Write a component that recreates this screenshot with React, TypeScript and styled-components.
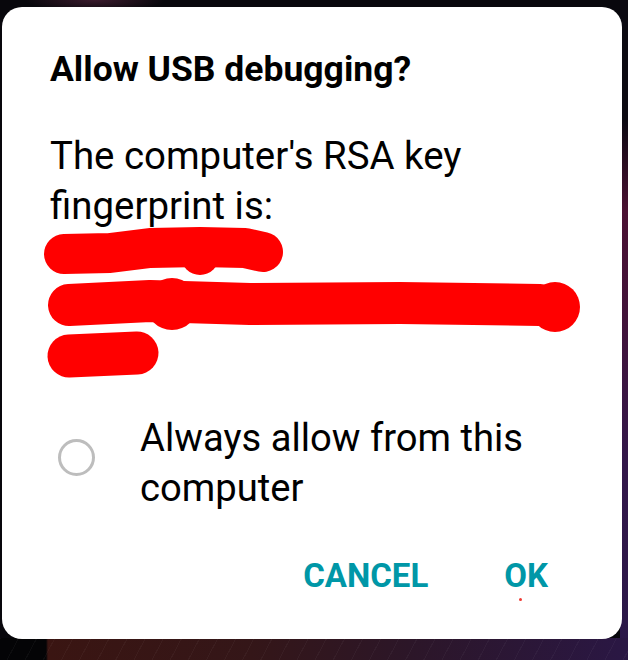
import React, { useState } from 'react'
import styled, { createGlobalStyle } from 'styled-components'

const GlobalStyle = createGlobalStyle`
  html, body {
    margin: 0;
    padding: 0;
  }
  body {
    min-height: 660px;
    font-family: Roboto, "Noto Sans", "Liberation Sans", sans-serif;
    background-color: #08070c;
    background-image:
      repeating-linear-gradient(118deg, rgba(255, 255, 255, 0.035) 0 1px, transparent 1px 16px),
      linear-gradient(90deg, #040406 0, #040406 46px, #3a1512 48px, #341618 40%, #2c1628 65%, #2a1744 100%),
      linear-gradient(180deg, #0c0a12 0, #0c0a12 18%, #4b1133 32%, #42133a 48%, #33174a 70%, #2a1848 100%),
      radial-gradient(ellipse 70px 12px at 95px 0, #3a1a2c, transparent);
    background-size: 100% 22px, 100% 22px, 8px 100%, 100% 10px;
    background-position: 0 100%, 0 100%, 100% 0, 0 0;
    background-repeat: no-repeat;
  }
`

const Dialog = styled.div`
  box-sizing: border-box;
  width: 620px;
  margin: 7px 6px 0 2px;
  padding: 42px 48px 44px 48px;
  background: #ffffff;
  border-radius: 20px;
`

const Title = styled.h2`
  margin: 0;
  font-size: 35.5px;
  line-height: 40px;
  font-weight: 700;
  color: #000;
`

const Message = styled.p`
  margin: 42px 0 0;
  font-size: 38.4px;
  line-height: 50px;
  font-weight: 400;
  color: #000;
`

const Fingerprint = styled.div`
  height: 150px;
`

const Scribble = styled.svg`
  display: block;
  overflow: visible;
`

const CheckRow = styled.label`
  display: flex;
  align-items: flex-start;
  gap: 45px;
  margin-top: 32px;
  cursor: pointer;
`

const Radio = styled.span<{ $checked: boolean }>`
  box-sizing: border-box;
  flex: none;
  width: 37px;
  height: 37px;
  margin: 26px 0 0 8px;
  border-radius: 50%;
  border: 3.5px solid ${p => (p.$checked ? '#0097a7' : '#bdbdbd')};
  background: ${p => (p.$checked ? 'radial-gradient(circle, #0097a7 0 8px, transparent 9px)' : 'transparent')};
`

const CheckLabel = styled.span`
  font-size: 38.2px;
  line-height: 50px;
  color: #000;
`

const Actions = styled.div`
  display: flex;
  justify-content: flex-end;
  gap: 76px;
  margin: 44px 26px 0 0;
`

const ActionButton = styled.button`
  position: relative;
  padding: 0;
  border: none;
  background: none;
  font-family: Roboto, "Noto Sans", "Liberation Sans", sans-serif;
  font-size: 33px;
  line-height: 38px;
  font-weight: 700;
  color: #0097a7;
  cursor: pointer;
`

const TouchDot = styled.span`
  position: absolute;
  left: 15px;
  top: 41px;
  width: 3px;
  height: 3px;
  border-radius: 50%;
  background: #f03a32;
`

const App = () => {
  const [always, setAlways] = useState(false)

  return (
    <>
      <GlobalStyle />
      <Dialog>
        <Title>Allow USB debugging?</Title>
        <Message>The computer's RSA key fingerprint is:</Message>
        <Fingerprint>
          {/* hand-drawn red marker over the key */}
          <Scribble width="530" height="150" viewBox="0 0 530 150">
            <g fill="#ff0000" stroke="#ff0000" strokeLinecap="round" strokeLinejoin="round">
              <path d="M14 23 L60 22 L100 17 L150 16 L195 17 L213 21" fill="none" strokeWidth="40" />
              <circle cx="150" cy="25" r="19" stroke="none" />
              <path d="M19 74 L100 70 L200 73 L350 72 L490 74" fill="none" strokeWidth="42" />
              <circle cx="122" cy="73" r="26" stroke="none" />
              <circle cx="505" cy="76" r="25" stroke="none" />
              <path d="M19 125 L87 122" fill="none" strokeWidth="43" />
            </g>
          </Scribble>
        </Fingerprint>
        <CheckRow onClick={() => setAlways(v => !v)}>
          <Radio $checked={always} />
          <CheckLabel>Always allow from this computer</CheckLabel>
        </CheckRow>
        <Actions>
          <ActionButton type="button">CANCEL</ActionButton>
          <ActionButton type="button">
            OK
            <TouchDot />
          </ActionButton>
        </Actions>
      </Dialog>
    </>
  )
}

export default App
